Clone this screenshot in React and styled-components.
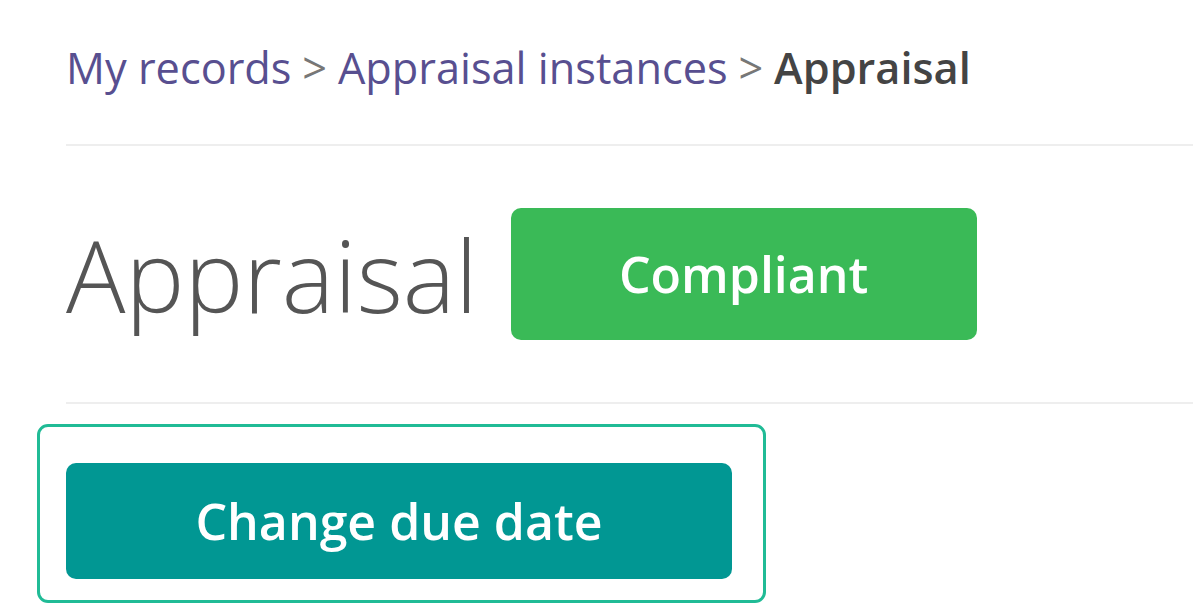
import React from "react";
import styled, { createGlobalStyle } from "styled-components";

const Global = createGlobalStyle`
  html, body { margin: 0; padding: 0; background: #fff; }
  body { font-family: "Open Sans", "Liberation Sans", sans-serif; }
`;

const Page = styled.div`
  padding-left: 66px;
  overflow: hidden;
`;

const Breadcrumb = styled.nav`
  display: flex;
  align-items: baseline;
  height: 144px;
  font-size: 43.3px;
  line-height: 136px;
  white-space: nowrap;
`;

const Crumb = styled.a`
  color: #584f90;
  text-decoration: none;
`;

const Sep = styled.span`
  color: #777;
  margin: 0 0.25em;
`;

const Current = styled.span`
  color: #444;
  font-weight: 600;
`;

const Divider = styled.hr`
  margin: 0;
  border: 0;
  border-top: 2px solid #eeeeee;
  width: 100%;
`;

const Header = styled.div`
  display: flex;
  align-items: center;
  gap: 33px;
  height: 256px;
`;

const Title = styled.h1`
  margin: 0;
  font-size: 99px;
  font-weight: 300;
  color: #555;
  line-height: 1;
`;

const Badge = styled.div`
  display: flex;
  align-items: center;
  justify-content: center;
  width: 466px;
  height: 132px;
  border-radius: 10px;
  background: #3aba57;
  color: #fff;
  font-size: 50px;
  font-weight: 600;
`;

const Actions = styled.div`
  padding-top: 20px;
`;

const FocusBox = styled.div`
  display: inline-block;
  margin-left: -29px;
  padding: 36px 31px 21px 26px;
  border: 3px solid #20bb96;
  border-radius: 11px;
`;

const Button = styled.button`
  display: flex;
  align-items: center;
  justify-content: center;
  width: 666px;
  height: 116px;
  border: 0;
  border-radius: 10px;
  background: #019793;
  color: #fff;
  font-family: "Open Sans", "Liberation Sans", sans-serif;
  font-size: 50px;
  font-weight: 600;
  cursor: pointer;
`;

export default function App() {
  return (
    <Page>
      <Global />
      <Breadcrumb>
        <Crumb href="#">My records</Crumb>
        <Sep>&gt;</Sep>
        <Crumb href="#">Appraisal instances</Crumb>
        <Sep>&gt;</Sep>
        <Current>Appraisal</Current>
      </Breadcrumb>
      <Divider />
      <Header>
        <Title>Appraisal</Title>
        <Badge>Compliant</Badge>
      </Header>
      <Divider />
      <Actions>
        <FocusBox>
          <Button>Change due date</Button>
        </FocusBox>
      </Actions>
    </Page>
  );
}
